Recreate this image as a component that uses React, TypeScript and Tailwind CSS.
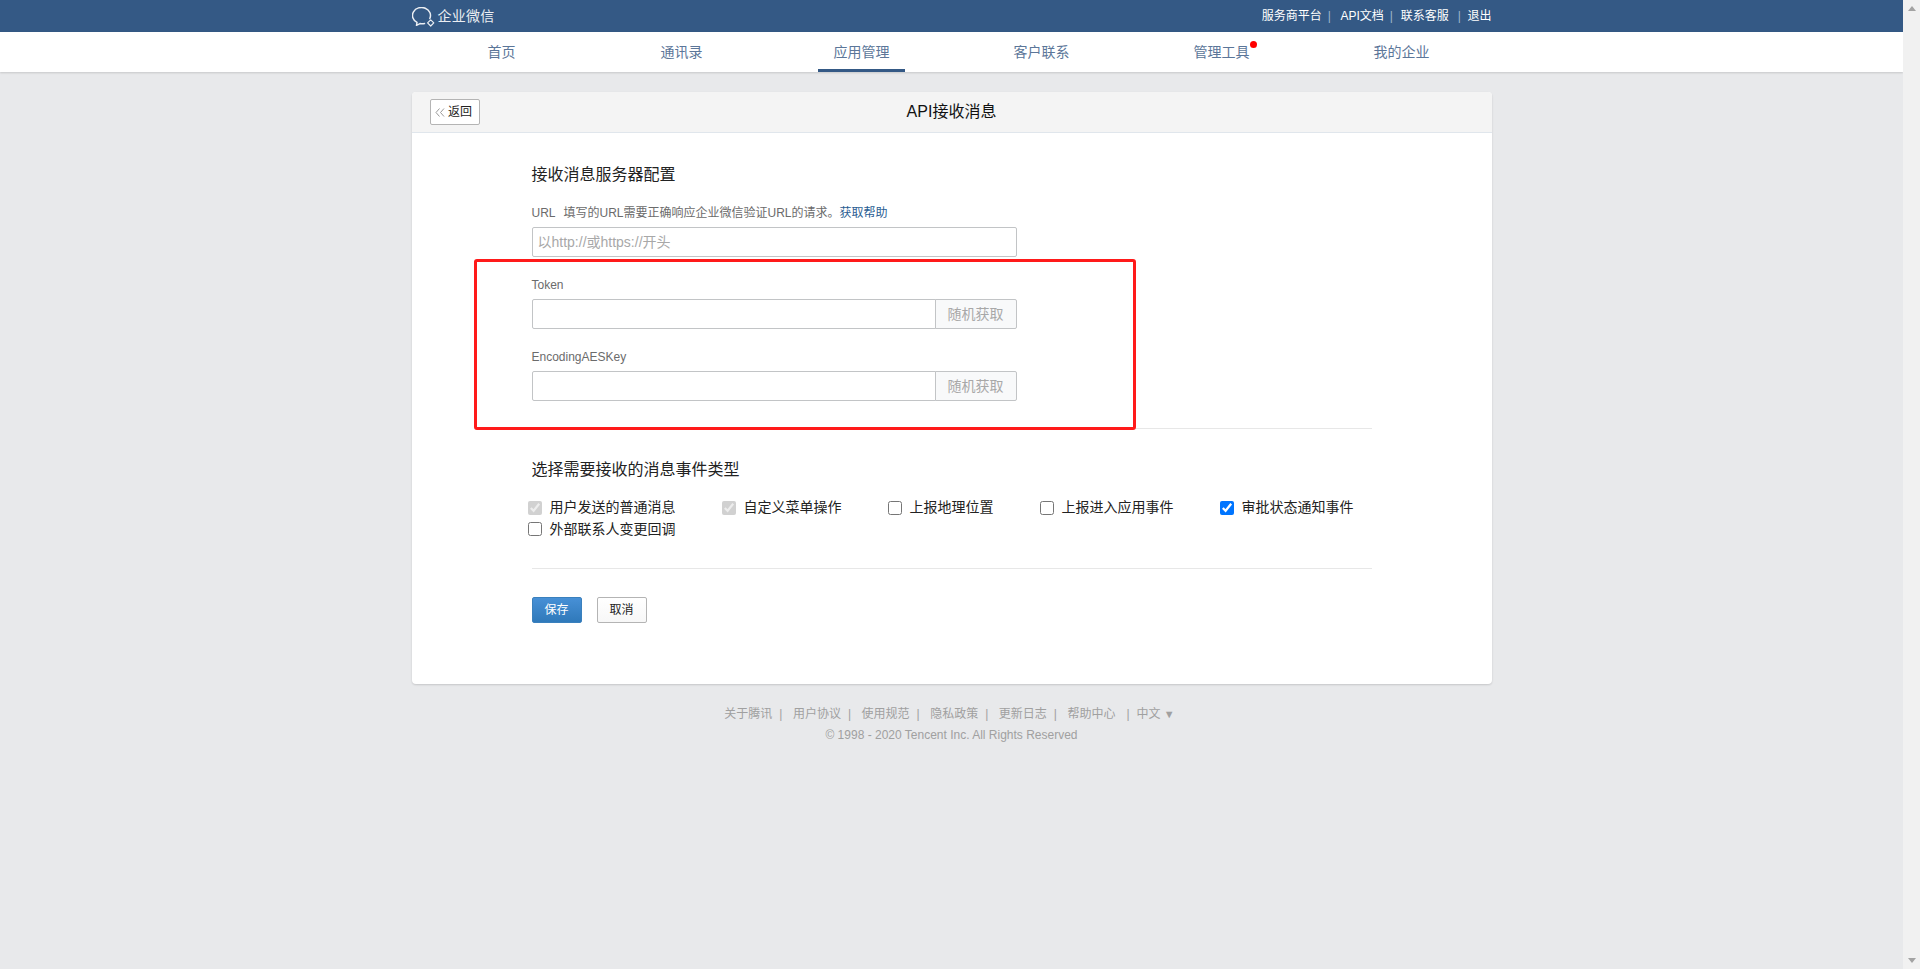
const font = "[font-family:'Liberation_Sans','Noto_Sans_CJK_SC',sans-serif]";

function Logo() {
  return (
    <svg width="24" height="20" viewBox="0 0 24 20" fill="none" stroke="#fff" strokeLinecap="round" strokeLinejoin="round" className="shrink-0">
      <path d="M17.800 11.500A9 8 0 1 0 5 15.400L4.500 18.300 8 16.600C9.500 16.900 11 16.900 12.500 16.600" strokeWidth="1.500" />
      <path d="M18.700 12.800L21.800 15.900 18.700 19 15.600 15.900Z" strokeWidth="1.200" />
    </svg>
  );
}

function NavItem({ label, active, dot }: { label: string; active?: boolean; dot?: boolean }) {
  return (
    <div className="w-[180px] h-10 flex justify-center">
      <a className={`relative h-10 w-[87px] flex items-center justify-center text-[14px] text-[#5b7699] ${active ? "border-b-[3px] border-[#345985] pt-[3px]" : ""}`}>
        {label}
        {dot && <span className="absolute left-[72px] top-[9px] w-[7px] h-[7px] rounded-full bg-[#ff0000]" />}
      </a>
    </div>
  );
}

function FooterLink({ label, wide }: { label: string; wide?: boolean }) {
  return (
    <>
      <a className="w-12 whitespace-nowrap">{label}</a>
      <span className={wide ? "ml-[11px] mr-[7px]" : "ml-[7px] mr-[10.500px]"}>|</span>
    </>
  );
}

function KeyField({ label }: { label: string }) {
  return (
    <div className="mt-[19px] first:mt-0">
      <div className="h-[18px] leading-[18px] text-[12px] text-[#6b6b6b]">{label}</div>
      <div className="mt-[5px] flex w-[485px] h-[30px]">
        <input className="flex-1 min-w-0 border border-[#c2c4c6] rounded-l-[2px] bg-white outline-none" />
        <button className="w-[82px] -ml-px border border-[#c2c4c6] rounded-r-[2px] bg-[#f8f9fa] text-[14px] text-[#a8a8a8]">随机获取</button>
      </div>
    </div>
  );
}

function EventCheck({ label, checked, disabled }: { label: string; checked?: boolean; disabled?: boolean }) {
  return (
    <label className="h-[21.500px] flex items-center text-[14px] text-[#222]">
      <input type="checkbox" defaultChecked={checked} disabled={disabled} className="w-[14px] h-[14px] m-0" />
      <span className="ml-[8px]">{label}</span>
    </label>
  );
}

function ScrollBar() {
  return (
    <aside className="w-[17px] h-full shrink-0 bg-[#f1f1f1] flex flex-col justify-between items-center py-[6px]">
      <svg width="8" height="5" viewBox="0 0 8 5"><path d="M4 0l4 5H0z" fill="#a3a3a3" /></svg>
      <svg width="8" height="5" viewBox="0 0 8 5"><path d="M4 5L0 0h8z" fill="#a3a3a3" /></svg>
    </aside>
  );
}

export default function App() {
  return (
    <div className={`${font} flex h-[969px] w-full overflow-hidden bg-[#e8e9eb]`}>
      <main className="flex-1 min-w-0 flex flex-col">
        <header className="h-8 bg-[#345985] shrink-0">
          <div className="w-[1080px] mx-auto h-full flex items-center justify-between">
            <div className="flex items-center gap-[2px] pt-[1px] text-white text-[14px] tracking-[0.250px] opacity-90">
              <Logo />
              <span>企业微信</span>
            </div>
            <div className="flex items-center text-[12px] text-white">
              <a>服务商平台</a>
              <span className="ml-[6px] mr-[9.500px] text-[#9fb4cb]">|</span>
              <a>API文档</a>
              <span className="ml-[6px] mr-[8px] text-[#9fb4cb]">|</span>
              <a>联系客服</a>
              <span className="ml-[9px] mr-[6.500px] text-[#9fb4cb]">|</span>
              <a>退出</a>
            </div>
          </div>
        </header>
        <nav className="h-10 bg-white shrink-0 shadow-[0_1px_2px_rgba(0,0,0,0.15)]">
          <div className="w-[1080px] mx-auto flex">
            <NavItem label="首页" />
            <NavItem label="通讯录" />
            <NavItem label="应用管理" active />
            <NavItem label="客户联系" />
            <NavItem label="管理工具" dot />
            <NavItem label="我的企业" />
          </div>
        </nav>

        <section className="mt-5 w-[1080px] h-[592px] mx-auto bg-white rounded-[4px] shadow-[0_1px_2px_rgba(0,0,0,0.15)] shrink-0">
          <div className="relative h-[41px] bg-[#f4f4f4] border-b border-[#e0e6ec] rounded-t-[4px] flex items-center justify-center">
            <button className="absolute left-[18px] top-[7px] w-[50px] h-[26px] pr-[2px] border border-[#b4b4b4] rounded-[2px] bg-white flex items-center justify-center text-[12px] text-[#222]">
              <svg width="10" height="9" viewBox="0 0 10 9" fill="none" stroke="#999" strokeWidth="1" className="mr-[3px]"><path d="M4.500.5L1 4.500l3.500 4M9 .5L5.500 4.500l3.500 4" /></svg>
              返回
            </button>
            <h1 className="text-[16px] text-[#111]">API接收消息</h1>
          </div>

          <div className="relative px-[120px] pt-[30px]">
            <h2 className="h-6 leading-6 text-[16px] text-[#222]">接收消息服务器配置</h2>
            <p className="mt-[17px] h-[18px] leading-[18px] text-[12px] text-[#6b6b6b] whitespace-pre">
              <span>URL</span>
              <span className="ml-[8px]">填写的URL需要正确响应企业微信验证URL的请求。</span>
              <a className="text-[#2a5d92]">获取帮助</a>
            </p>
            <input
              placeholder="以http://或https://开头"
              className="block mt-[5px] w-[485px] h-[30px] px-[5px] border border-[#c2c4c6] rounded-[2px] text-[14px] outline-none placeholder:text-[#a8a8a8]"
            />

            <div className="mt-[19px] h-[152px]">
              <KeyField label="Token" />
              <KeyField label="EncodingAESKey" />
            </div>
            <div className="absolute left-[62px] top-[126px] w-[662px] h-[171px] border-[3px] border-[#ff1a1a] rounded-[3px] pointer-events-none" />

            <div className="border-t border-[#e7e7e7]" />
            <h2 className="mt-[29px] h-6 leading-6 text-[16px] text-[#222]">选择需要接收的消息事件类型</h2>
            <div className="-ml-1 mt-[15px] w-[844px] h-[43px] flex flex-wrap gap-x-[46px]">
              <EventCheck label="用户发送的普通消息" checked disabled />
              <EventCheck label="自定义菜单操作" checked disabled />
              <EventCheck label="上报地理位置" />
              <EventCheck label="上报进入应用事件" />
              <EventCheck label="审批状态通知事件" checked />
              <EventCheck label="外部联系人变更回调" />
            </div>
            <div className="mt-[28px] border-t border-[#e7e7e7]" />
            <div className="mt-[28px] flex gap-[15px]">
              <button className="w-[50px] h-[26px] rounded-[2px] border border-[#3a80bd] bg-gradient-to-b from-[#4790d6] to-[#2f79ba] text-white text-[12px]">保存</button>
              <button className="w-[50px] h-[26px] rounded-[2px] border border-[#b4b4b4] bg-gradient-to-b from-white to-[#f7f7f7] text-[#222] text-[12px]">取消</button>
            </div>
          </div>
        </section>

        <footer className="mt-[21px] text-[12px] text-[#a0a0a0]">
          <div className="h-[18px] flex items-center justify-center pr-[4px]">
            <FooterLink label="关于腾讯" />
            <FooterLink label="用户协议" />
            <FooterLink label="使用规范" />
            <FooterLink label="隐私政策" />
            <FooterLink label="更新日志" />
            <FooterLink label="帮助中心" wide />
            <a className="whitespace-nowrap">中文 <span className="text-[11px]">▼</span></a>
          </div>
          <div className="mt-[3px] h-[18px] leading-[18px] text-center">© 1998 - 2020 Tencent Inc. All Rights Reserved</div>
        </footer>
      </main>
      <ScrollBar />
    </div>
  );
}
